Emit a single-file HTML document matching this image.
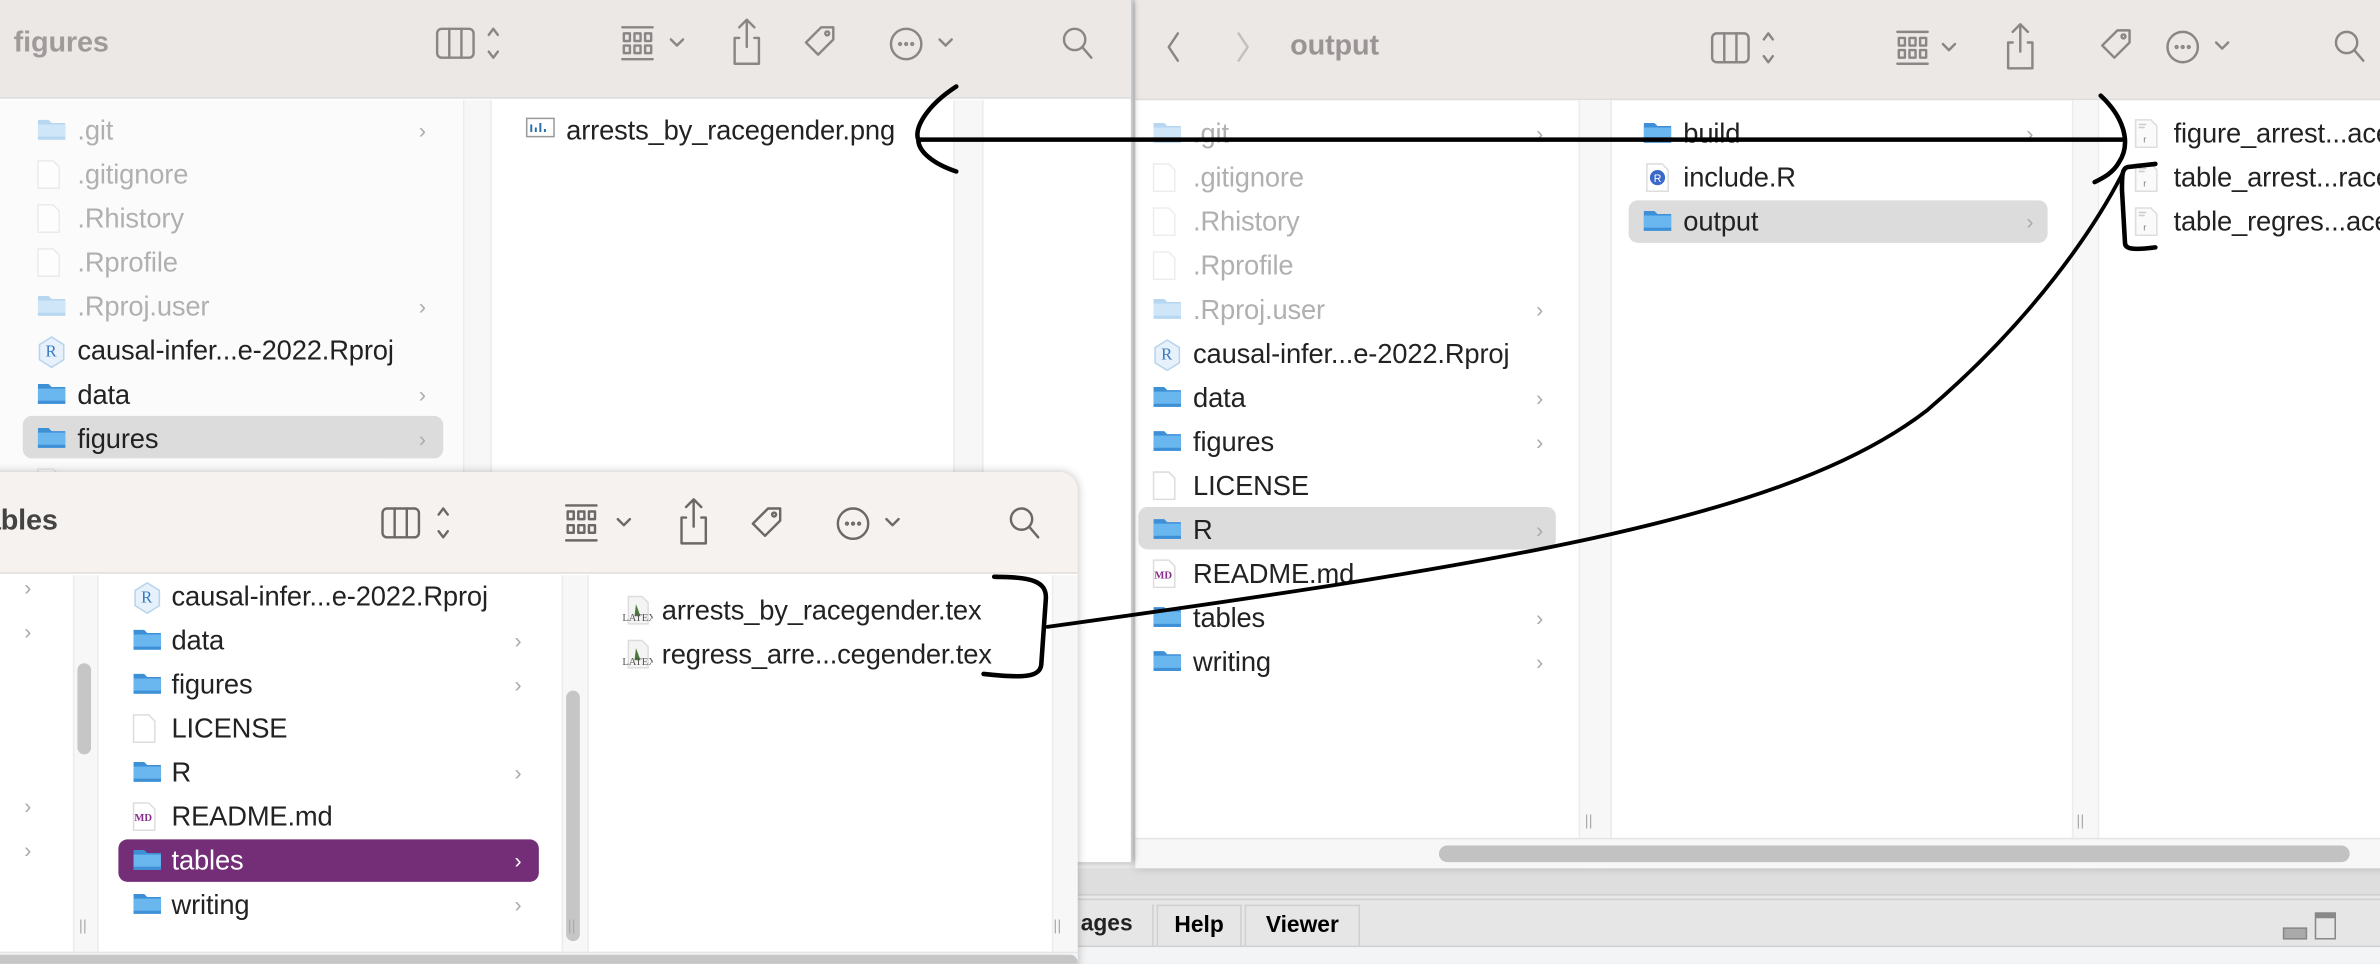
<!DOCTYPE html>
<html><head><meta charset="utf-8"><style>
*{margin:0;padding:0;box-sizing:border-box}
html,body{width:2380px;height:964px;overflow:hidden;background:#e4e4e4}
#s{position:absolute;left:0;top:0;width:1568px;height:635px;transform:scale(1.51786);transform-origin:0 0;font-family:"Liberation Sans",sans-serif;overflow:hidden}
.a{position:absolute}
.win{position:absolute;background:#fff;overflow:hidden}
.tb{position:absolute;left:0;right:0;top:0}
.t{position:absolute;font-size:18px;line-height:22px;color:#222;white-space:nowrap;letter-spacing:-0.1px}
.d{color:#b0b0b0}
.ch{position:absolute;font-size:14px;color:#aaa;line-height:22px}
.sel{position:absolute;border-radius:6px}
.col{position:absolute;top:0;bottom:0}
</style></head><body><div id="s">

<div class="a" style="left:700px;top:570px;width:868px;height:65px;background:#e8e8e8"></div>
<div class="a" style="left:700px;top:572px;width:868px;height:18px;background:#dedede;border-bottom:1px solid #cfcfcf"></div>
<div class="a" style="left:700px;top:592px;width:868px;height:32px;background:#e6e6e6;border-top:1px solid #d0d0d0;border-bottom:1px solid #cfcfcf"></div>
<div class="a" style="left:708px;top:596px;width:52px;height:28px;border-right:1px solid #d0d0d0;font-size:15px;line-height:26px;color:#222;font-weight:bold;padding-left:4px">ages</div>
<div class="a" style="left:762px;top:596px;width:56px;height:28px;border:1px solid #d0d0d0;border-bottom:0;font-size:15px;line-height:26px;font-weight:bold;text-align:center">Help</div>
<div class="a" style="left:820px;top:596px;width:76px;height:28px;border:1px solid #d0d0d0;border-bottom:0;font-size:15px;line-height:26px;font-weight:bold;text-align:center">Viewer</div>
<div class="a" style="left:1504px;top:611px;width:16px;height:8px;border:1px solid #888;background:#aaa"></div>
<div class="a" style="left:1525px;top:601px;width:14px;height:18px;border:1px solid #888;border-top:4px solid #888"></div>
<div class="a" style="left:700px;top:624px;width:868px;height:11px;background:#f2f4f5"></div>

<div class="win" style="left:748px;top:0;width:840px;height:572px;background:#fff;box-shadow:0 0 6px rgba(0,0,0,.2)">
 <div class="tb" style="height:66px;background:#ece8e6;border-bottom:1px solid #ddd"></div>
 <div class="t" style="left:102px;top:20px;font-size:19px;font-weight:bold;color:#9a9594">output</div>
 <svg class="a" style="left:0;top:0" width="820" height="66" fill="none" stroke="#8a8686" stroke-width="1.6" stroke-linecap="round" stroke-linejoin="round">
  <path d="M28 22l-6 9 6 9"/><path d="M68 22l6 9-6 9" stroke="#c4c0bf"/>
  <rect x="380" y="22" width="24" height="19" rx="3"/><path d="M388 22v19M396 22v19"/><path d="M414 26l3-4 3 4M414 37l3 4 3-4"/>
  <path d="M502 21h20M502 42h20"/><rect x="503" y="25" width="4" height="5"/><rect x="510" y="25" width="4" height="5"/><rect x="517" y="25" width="4" height="5"/><rect x="503" y="33" width="4" height="5"/><rect x="510" y="33" width="4" height="5"/><rect x="517" y="33" width="4" height="5"/><path d="M532 29l4 4 4-4"/>
  <path d="M578 28h-3v17h16v-17h-3M583 34v-18M578 21l5-5 5 5"/>
  <path d="M637 30l10-10h8v8l-10 10z"/><circle cx="651" cy="24" r="1.3"/>
  <circle cx="690" cy="31" r="10"/><circle cx="686" cy="31" r=".6"/><circle cx="690" cy="31" r=".6"/><circle cx="694" cy="31" r=".6"/><path d="M712 28l4 4 4-4"/>
  <circle cx="798" cy="28" r="7"/><path d="M803 33l6 7"/>
 </svg>
 <div class="col" style="left:292px;top:66px;width:22px;background:#f7f7f7;border-left:1px solid #ececec;border-right:1px solid #ececec"></div>
 <div class="col" style="left:617px;top:66px;width:18px;background:#f7f7f7;border-left:1px solid #ececec;border-right:1px solid #ececec"></div>
 <div class="a" style="left:0;top:552px;width:840px;height:20px;background:#f7f7f7;border-top:1px solid #e5e5e5"></div>
 <div class="a" style="left:200px;top:557px;width:600px;height:11px;border-radius:6px;background:#c2c2c2"></div>
 <div class="a" style="left:296px;top:536px;font-size:10px;color:#aaa">||</div>
 <div class="a" style="left:620px;top:536px;font-size:10px;color:#aaa">||</div>
</div>

<div class="win" style="left:0;top:0;width:746px;height:568px;box-shadow:1px 0 4px rgba(0,0,0,.25);border-right:1px solid #ccc">
 <div class="tb" style="height:65px;background:#ece8e6;border-bottom:1px solid #ddd"></div>
 <div class="t" style="left:9px;top:18px;font-size:19px;font-weight:bold;color:#a09b9a">figures</div>
 <svg class="a" style="left:0;top:0" width="746" height="65" fill="none" stroke="#8a8686" stroke-width="1.6" stroke-linecap="round" stroke-linejoin="round">
  <rect x="288" y="19" width="24" height="19" rx="3"/><path d="M296 19v19M304 19v19"/><path d="M322 23l3-4 3 4M322 34l3 4 3-4"/>
  <path d="M410 18h20M410 39h20"/><rect x="411" y="22" width="4" height="5"/><rect x="418" y="22" width="4" height="5"/><rect x="425" y="22" width="4" height="5"/><rect x="411" y="30" width="4" height="5"/><rect x="418" y="30" width="4" height="5"/><rect x="425" y="30" width="4" height="5"/><path d="M442 26l4 4 4-4"/>
  <path d="M487 25h-3v17h16v-17h-3M492 31v-18M487 18l5-5 5 5"/>
  <path d="M531 28l10-10h8v8l-10 10z"/><circle cx="545" cy="22" r="1.3"/>
  <circle cx="597" cy="29" r="10"/><circle cx="593" cy="29" r=".6"/><circle cx="597" cy="29" r=".6"/><circle cx="601" cy="29" r=".6"/><path d="M619 26l4 4 4-4"/>
  <circle cx="708" cy="26" r="7"/><path d="M713 31l6 7"/>
 </svg>
 <div class="col" style="left:0;top:66px;width:305px;background:#fbfbfb"></div>
 <div class="col" style="left:305px;top:66px;width:19px;background:#f7f7f7;border-left:1px solid #ececec;border-right:1px solid #ececec"></div>
 <div class="col" style="left:628px;top:66px;width:20px;background:#f7f7f7;border-left:1px solid #ececec;border-right:1px solid #ececec"></div>
 <div class="sel" style="left:15px;top:274px;width:277px;height:28px;background:#dcdcdc"></div>
</div>

<div class="win" style="left:-10px;top:311px;width:720px;height:340px;border-radius:0 12px 0 0;box-shadow:0 0 6px rgba(0,0,0,.25)">
 <div class="tb" style="height:67px;background:#f6f2ef;border-bottom:1px solid #e2dedc"></div>
 <div class="t" style="left:0;top:22px;font-size:19px;font-weight:bold;color:#444">ables</div>
 <svg class="a" style="left:10px;top:0" width="710" height="67" fill="none" stroke="#6c6868" stroke-width="1.6" stroke-linecap="round" stroke-linejoin="round">
  <rect x="252" y="24" width="24" height="19" rx="3"/><path d="M260 24v19M268 24v19"/><path d="M289 28l3-4 3 4M289 39l3 4 3-4"/>
  <path d="M373 22h20M373 45h20"/><rect x="374" y="26" width="4" height="5"/><rect x="381" y="26" width="4" height="5"/><rect x="388" y="26" width="4" height="5"/><rect x="374" y="35" width="4" height="5"/><rect x="381" y="35" width="4" height="5"/><rect x="388" y="35" width="4" height="5"/><path d="M407 31l4 4 4-4"/>
  <path d="M452 30h-3v17h16v-17h-3M457 36v-18M452 23l5-5 5 5"/>
  <path d="M496 34l10-10h8v8l-10 10z"/><circle cx="510" cy="28" r="1.3"/>
  <circle cx="562" cy="34" r="10"/><circle cx="558" cy="34" r=".6"/><circle cx="562" cy="34" r=".6"/><circle cx="566" cy="34" r=".6"/><path d="M584 31l4 4 4-4"/>
  <circle cx="673" cy="31" r="7"/><path d="M678 36l6 7"/>
 </svg>
 <div class="col" style="left:58px;top:68px;width:17px;background:#f7f7f7;border-left:1px solid #ececec;border-right:1px solid #ececec"></div>
 <div class="a" style="left:61px;width:9px;height:60px;border-radius:5px;background:#c6c6c6;top:126px"></div>
 <div class="col" style="left:380px;top:68px;width:18px;background:#f7f7f7;border-left:1px solid #ececec;border-right:1px solid #ececec"></div>
 <div class="a" style="left:383px;top:144px;width:9px;height:165px;border-radius:5px;background:#c6c6c6"></div>
 <div class="col" style="left:703px;top:68px;width:17px;background:#f7f7f7;border-left:1px solid #ececec"></div>
 <div class="a" style="left:0;top:316px;width:720px;height:24px;background:#f5f5f5;border-top:1px solid #e5e5e5"></div>
 <div class="a" style="left:0;top:318px;width:720px;height:10px;background:#c6c6c6;border-radius:5px"></div>
 <div class="a" style="left:62px;top:294px;font-size:10px;color:#aaa">||</div>
 <div class="a" style="left:384px;top:294px;font-size:10px;color:#aaa">||</div>
 <div class="a" style="left:704px;top:294px;font-size:10px;color:#aaa">||</div>
 <div class="sel" style="left:88px;top:242px;width:277px;height:28px;background:#742e77"></div>
</div>

<svg id="ann" class="a" style="left:0;top:0;z-index:5" width="1568" height="635" fill="none" stroke="#000" stroke-linecap="round" stroke-linejoin="round">
 <path stroke-width="3" d="M630 57C610 70 602 85 605 92C605 100 615 108 630 113"/>
 <path stroke-width="3" d="M606 92L1398 92"/>
 <path stroke-width="3" d="M1384 63C1400 78 1404 95 1396 107C1392 114 1386 117 1380 120"/>
 <path stroke-width="3" d="M1420 108L1402 110C1398 111 1398 115 1398 125L1400 160C1400 164 1405 165 1420 163"/>
 <path stroke-width="2.5" d="M690 413C1000 370 1180 340 1270 270C1340 210 1380 150 1398 115"/>
 <path stroke-width="3" d="M655 380C680 380 690 383 689 395L686 438C685 446 675 447 648 444"/>
</svg>

<script>
const FOLD=(c1,c2)=>`<svg width="20" height="17" viewBox="0 0 20 17"><path d="M1 3h7l2 2h9v11H1z" fill="${c2}"/><rect x="1" y="6" width="18" height="10" fill="${c1}"/><rect x="1" y="14" width="18" height="2" fill="${c2}"/></svg>`;
const F=FOLD('#6ab6ef','#3d8fd6'), FD=FOLD('#cfe6f8','#b7d7f1');
const DOC=(o)=>`<svg width="16" height="20" viewBox="0 0 16 20" opacity="${o}"><path d="M1 1h10l4 4v14H1z" fill="#fff" stroke="#ddd"/></svg>`;
const RPROJ=`<svg width="20" height="22" viewBox="0 0 20 22"><path d="M10 1l8 5v10l-8 5-8-5V6z" fill="#e6f1fb" stroke="#b7d3ee"/><text x="6" y="14" font-size="11" font-family="Liberation Serif" fill="#3b79c0">R</text></svg>`;
const RFILE=`<svg width="16" height="20" viewBox="0 0 16 20"><path d="M1 1h10l4 4v14H1z" fill="#fff" stroke="#ddd"/><circle cx="8" cy="10" r="5" fill="#3b69c8"/><text x="5.5" y="13" font-size="7" fill="#fff" font-family="Liberation Sans">R</text></svg>`;
const MD=`<svg width="16" height="20" viewBox="0 0 16 20"><path d="M1 1h10l4 4v14H1z" fill="#fff" stroke="#ddd"/><text x="1.5" y="13" font-size="7" fill="#8a2c8c" font-family="Liberation Serif" font-weight="bold">MD</text></svg>`;
const PNG=`<svg width="20" height="16" viewBox="0 0 20 16"><rect x="1" y="2" width="18" height="12" fill="#fff" stroke="#999"/><path d="M4 11V6M7 11V8M10 11V5M13 11V9" stroke="#2a6fa8" stroke-width="1.3"/></svg>`;
const TEX=`<svg width="20" height="20" viewBox="0 0 20 20"><path d="M4 1h9l4 4v14H4z" fill="#f4f4f4" stroke="#ddd"/><path d="M9 6l3 8H8z" fill="#4a7a3a"/><text x="0" y="17" font-size="7" fill="#555" font-family="Liberation Serif">LATEX</text></svg>`;
const RDOC=`<svg width="16" height="20" viewBox="0 0 16 20"><path d="M1 1h10l4 4v14H1z" fill="#fafafa" stroke="#ddd"/><path d="M3 4h5M3 6h4" stroke="#ccc"/><text x="6" y="16" font-size="6" fill="#777">r</text></svg>`;
let h='';
function row(ix,tx,y,icon,text,cls,chev,chx,col){
 h+=`<div class="a" style="left:${ix}px;top:${y-9}px;line-height:0">${icon}</div>`;
 h+=`<div class="t ${cls||''}" style="left:${tx}px;top:${y-10}px;${col?'color:'+col:''}">${text}</div>`;
 if(chev)h+=`<div class="ch" style="left:${chx}px;top:${y-10}px;${col?'color:'+col:''}">&#x203A;</div>`;
}
const B1=[['.git',FD,'d',1],['.gitignore',DOC(.5),'d'],['.Rhistory',DOC(.5),'d'],['.Rprofile',DOC(.5),'d'],['.Rproj.user',FD,'d',1],['causal-infer...e-2022.Rproj',RPROJ],['data',F,'',1],['figures',F,'',1],['LICENSE',DOC(1)],['R',F,'',1],['README.md',MD],['tables',F,'',1],['writing',F,'',1]];
h+=`<div class="sel" style="left:750px;top:334px;width:275px;height:28px;background:#dcdcdc"></div>`;
B1.forEach((r,i)=>row(759,786,87+29*i,r[1],r[0],r[2],r[3],1012));
h+=`<div class="sel" style="left:1073px;top:132px;width:276px;height:28px;background:#dcdcdc"></div>`;
row(1082,1109,87,F,'build','',1,1335);row(1084,1109,116,RFILE,'include.R');row(1082,1109,145,F,'output','',1,1335);
row(1406,1432,87,RDOC,'figure_arrest...ace');row(1406,1432,116,RDOC,'table_arrest...race');row(1406,1432,145,RDOC,'table_regres...ace');
const h1=h;h='';
const A1=[['.git',FD,'d',1],['.gitignore',DOC(.5),'d'],['.Rhistory',DOC(.5),'d'],['.Rprofile',DOC(.5),'d'],['.Rproj.user',FD,'d',1],['causal-infer...e-2022.Rproj',RPROJ],['data',F,'',1],['figures',F,'',1],['LICENSE',DOC(.6),'d']];
A1.forEach((r,i)=>row(24,51,85+29*i,r[1],r[0],r[2],r[3],276));
row(346,373,85,PNG,'arrests_by_racegender.png');
const h2=h;h='';
[386,415,530,559].forEach(y=>h+=`<div class="ch" style="left:16px;top:${y-10}px">&#x203A;</div>`);
const C1=[['causal-infer...e-2022.Rproj',RPROJ],['data',F,'',1],['figures',F,'',1],['LICENSE',DOC(1)],['R',F,'',1],['README.md',MD],['tables',F,'',1,'#fff'],['writing',F,'',1]];
C1.forEach((r,i)=>row(87,113,392+29*i,r[1],r[0],r[2],r[3],339,r[4]));
row(410,436,401,TEX,'arrests_by_racegender.tex');row(410,436,430,TEX,'regress_arre...cegender.tex');
const h3=h;
const wins=document.querySelectorAll('.win');
wins[0].insertAdjacentHTML('afterend','<div>'+h1+'</div>');
wins[1].insertAdjacentHTML('afterend','<div>'+h2+'</div>');
wins[2].insertAdjacentHTML('afterend','<div>'+h3+'</div>');
</script>
</div></body></html>
